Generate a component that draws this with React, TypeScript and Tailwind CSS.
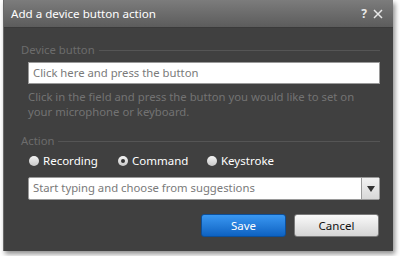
export default function App() {
  const font = { fontFamily: '"Noto Sans", "Open Sans", sans-serif' };
  return (
    <div className="w-[400px] h-[256px] bg-white" style={font}>
      <div className="ml-[3px] w-[390px] h-[251px] bg-[#404040] flex flex-col shadow-[2px_3px_5px_rgba(0,0,0,0.45)] border-l border-[#6a6a6a]">
        <div className="h-[28px] bg-gradient-to-b from-[#7c7c7c] to-[#5c5c5c] border-b border-[#3a3a3a] flex items-center pl-[7px] pr-[10px]">
          <span className="text-white text-[11.6px]">Add a device button action</span>
          <div className="ml-auto flex items-center gap-[6px] text-[#e8e8e8]">
            <span className="text-[12px] font-bold">?</span>
            <svg width="10" height="10" viewBox="0 0 10 10">
              <path d="M1 1L9 9M9 1L1 9" stroke="#e8e8e8" strokeWidth="1.5" />
            </svg>
          </div>
        </div>
        <div className="pl-[17px] pr-[13px] pt-[14px] flex flex-col text-[11.3px]">
          <div className="flex items-center h-[16px]">
            <span className="text-[#6c6c6c] mr-[4px]">Device button</span>
            <div className="flex-1 h-px bg-[#555]" />
          </div>
          <div className="pl-[7px] mt-[4px]">
            <div className="h-[22px] bg-white border border-[#9a9a9a] flex items-center px-[4px]">
              <span className="text-[#7a7a7a]">Click here and press the button</span>
            </div>
            <div className="mt-[5px] leading-[15px] text-[#737373]">
              Click in the field and press the button you would like to set on<br />
              your microphone or keyboard.
            </div>
          </div>
          <div className="flex items-center h-[16px] mt-[14px]">
            <span className="text-[#6c6c6c] mr-[4px]">Action</span>
            <div className="flex-1 h-px bg-[#555]" />
          </div>
          <div className="pl-[8px] mt-[2px] flex items-center h-[20px] text-white text-[11.5px]">
            <div className="flex items-center w-[89px]">
              <span className="w-[10px] h-[10px] rounded-full bg-gradient-to-b from-[#f4f4f4] to-[#c8c8c8] mr-[4px]" />
              <span>Recording</span>
            </div>
            <div className="flex items-center w-[89px]">
              <span className="w-[10px] h-[10px] rounded-full bg-gradient-to-b from-[#f4f4f4] to-[#c8c8c8] mr-[4px] flex items-center justify-center">
                <span className="w-[4px] h-[4px] rounded-full bg-[#333]" />
              </span>
              <span>Command</span>
            </div>
            <div className="flex items-center">
              <span className="w-[10px] h-[10px] rounded-full bg-gradient-to-b from-[#f4f4f4] to-[#c8c8c8] mr-[4px]" />
              <span>Keystroke</span>
            </div>
          </div>
          <div className="pl-[7px] mt-[6px]">
            <div className="h-[23px] bg-white border border-[#9a9a9a] rounded-[2px] flex items-center">
              <span className="text-[#7a7a7a] pl-[4px] flex-1">Start typing and choose from suggestions</span>
              <div className="w-[18px] h-full border-l border-[#9a9a9a] bg-gradient-to-b from-[#f2f2f2] to-[#d8d8d8] flex items-center justify-center">
                <svg width="8" height="6" viewBox="0 0 8 6"><path d="M0 0H8L4 6Z" fill="#333" /></svg>
              </div>
            </div>
          </div>
          <div className="flex justify-end gap-[8px] mt-[14px] pr-[1px]">
            <button className="w-[85px] h-[23px] rounded-[3px] border border-[#0c4f9a] bg-gradient-to-b from-[#3a98f2] to-[#0d62c2] text-white text-[11.5px]">Save</button>
            <button className="w-[85px] h-[23px] rounded-[3px] border border-[#7a7a7a] bg-gradient-to-b from-[#fafafa] to-[#d4d4d4] text-[#111] text-[11.5px]">Cancel</button>
          </div>
        </div>
      </div>
    </div>
  );
}
